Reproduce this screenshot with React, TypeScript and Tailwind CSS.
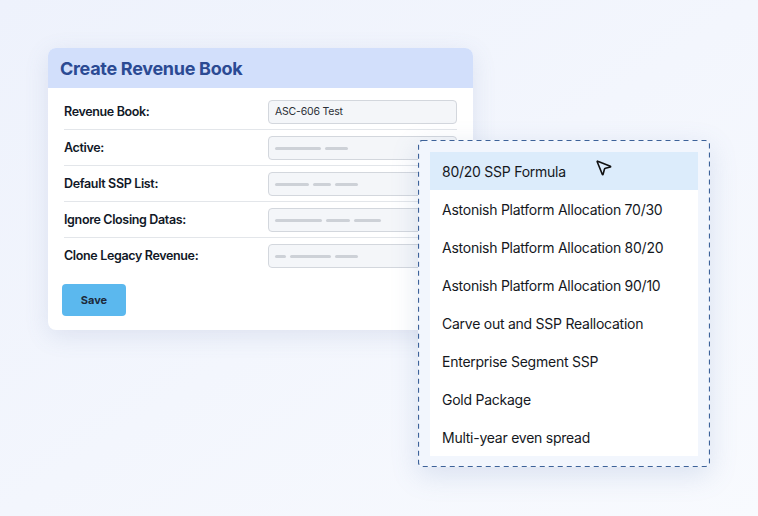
import { MousePointer2 } from 'lucide-react'

const rows = [
  { label: 'Revenue Book:', value: 'ASC-606 Test', bars: [] as number[] },
  { label: 'Active:', bars: [46, 23] },
  { label: 'Default SSP List:', bars: [34, 18, 23] },
  { label: 'Ignore Closing Datas:', bars: [47, 24, 27] },
  { label: 'Clone Legacy Revenue:', bars: [11, 41, 23] },
]

const options = [
  '80/20 SSP Formula',
  'Astonish Platform Allocation 70/30',
  'Astonish Platform Allocation 80/20',
  'Astonish Platform Allocation 90/10',
  'Carve out and SSP Reallocation',
  'Enterprise Segment SSP',
  'Gold Package',
  'Multi-year even spread',
]

export default function App() {
  return (
    <div
      className="relative w-[758px] h-[516px] overflow-hidden bg-gradient-to-br from-[#eef2fc] to-[#f8fafe] pt-12 pl-12"
      style={{ fontFamily: 'Inter, "Noto Sans", sans-serif' }}
    >
      {/* Form card */}
      <div className="w-[425px] rounded-lg bg-white shadow-[0_6px_24px_rgba(90,110,160,0.14)] overflow-hidden">
        <div className="h-10 bg-[#d2dffb] flex items-center px-3">
          <h1 className="text-[18px] font-bold text-[#2b4a93] tracking-[-0.3px]">Create Revenue Book</h1>
        </div>

        <div className="px-4 pt-[6px] pb-[14px]">
          {rows.map((row, i) => (
            <div
              key={row.label}
              className={
                i < rows.length - 1
                  ? 'flex items-center justify-between pt-[6px] pb-[5px] border-b border-[#e3e6ea]'
                  : 'flex items-center justify-between pt-[6px]'
              }
            >
              <span className="text-[12.5px] font-semibold tracking-[-0.35px] text-[#111827]">{row.label}</span>
              <div className="w-[189px] h-6 rounded-sm border border-[#d3d7dd] bg-[#f4f6f9] flex items-center gap-[4px] px-[6px]">
                {row.value ? (
                  <span className="text-[10.5px] tracking-[-0.2px] text-[#2b2f36]">{row.value}</span>
                ) : (
                  row.bars.map((w, j) => (
                    <span key={j} className="h-[3px] rounded-full bg-[#cdd1d7]" style={{ width: w }} />
                  ))
                )}
              </div>
            </div>
          ))}

          <button className="mt-4 -ml-[2px] w-16 h-8 rounded-sm bg-[#5bb8ee] text-[11px] font-bold text-[#1d2a3b]">
            Save
          </button>
        </div>
      </div>

      {/* Dropdown list */}
      <div className="absolute left-[418px] top-[140px] w-[292px] h-[327px] rounded-[4px] bg-[#f2f6fd] p-3 shadow-[0_8px_28px_rgba(90,120,180,0.18)]">
        <svg className="absolute inset-0 pointer-events-none" width="292" height="327">
          <rect
            x="0.5"
            y="0.5"
            width="291"
            height="326"
            rx="4"
            fill="none"
            stroke="#3d6299"
            strokeWidth="1.2"
            strokeDasharray="5 4"
          />
        </svg>
        <ul className="bg-white">
          {options.map((opt, i) => (
            <li
              key={opt}
              className={
                i === 0
                  ? 'relative h-[38px] flex items-center px-3 bg-[#dcecfb] text-[14px] tracking-[-0.25px] text-[#15181d]'
                  : 'h-[38px] flex items-center px-3 text-[14px] tracking-[-0.25px] text-[#15181d]'
              }
            >
              {opt}
              {i === 0 && (
                <MousePointer2
                  className="absolute left-[164px] top-[6px] text-[#111]"
                  size={19}
                  strokeWidth={2}
                />
              )}
            </li>
          ))}
        </ul>
      </div>
    </div>
  )
}
